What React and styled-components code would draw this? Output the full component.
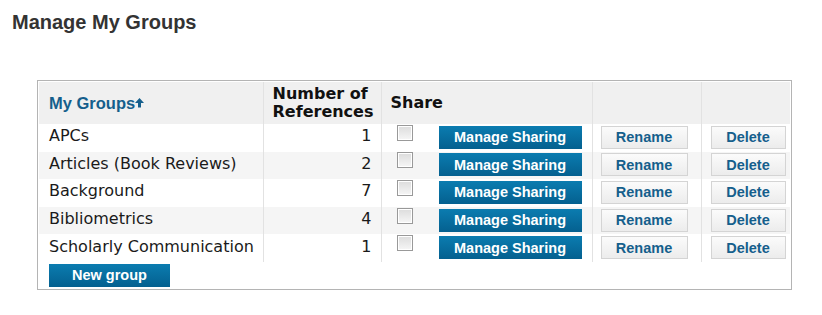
import React from 'react'
import styled, { createGlobalStyle } from 'styled-components'

const GlobalStyle = createGlobalStyle`
  body {
    margin: 0;
    background: #fff;
    font-family: "DejaVu Sans", Verdana, sans-serif;
  }
`

const Page = styled.div`
  padding: 10px 12px;
`

const Title = styled.h1`
  margin: 0;
  font-family: "Liberation Sans", Arial, sans-serif;
  font-size: 20px;
  line-height: 24px;
  font-weight: 700;
  color: #333;
`

const Panel = styled.div`
  margin: 46px 0 0 25px;
  width: 751px;
  border: 1px solid #b4b4b4;
  padding: 1px 1px 2px 1px;
`

const Table = styled.table`
  width: 100%;
  border-collapse: collapse;
  table-layout: fixed;
`

const HeadRow = styled.tr`
  background: #f0f0f0;
  height: 42px;
`

const Th = styled.th`
  text-align: left;
  vertical-align: middle;
  padding: ${(p) => (p.$first ? '0 0 0 10px' : '0 0 0 9px')};
  font-family: "DejaVu Sans", Verdana, sans-serif;
  font-size: 16px;
  line-height: 18px;
  font-weight: 700;
  color: #111;
  border-left: ${(p) => (p.$first ? 'none' : '1px solid #e2e2e2')};
`

const SortLink = styled.a`
  font-family: "Liberation Sans", Arial, sans-serif;
  font-size: 16.5px;
  font-weight: 700;
  color: #155f8c;
  text-decoration: none;
  display: inline-flex;
  align-items: center;
`

const Row = styled.tr`
  height: 27.6px;
  background: ${(p) => (p.$alt ? '#f5f5f5' : '#fff')};
`

const Td = styled.td`
  padding: ${(p) => p.$pad || '0 0 3px 10px'};
  font-size: 16px;
  line-height: 18px;
  color: #1a1a1a;
  text-align: ${(p) => (p.$right ? 'right' : 'left')};
  vertical-align: middle;
  border-left: ${(p) => (p.$first ? 'none' : '1px solid #e2e2e2')};
  white-space: nowrap;
`

const ShareCell = styled.div`
  display: flex;
  align-items: flex-start;
  gap: 26px;
`

const Check = styled.input.attrs({ type: 'checkbox' })`
  appearance: none;
  margin: -1px 0 0 0;
  width: 16px;
  height: 16px;
  border: 1px solid #999;
  background: linear-gradient(#dcdcdc, #f6f6f6);
  box-shadow: inset 0 0 0 1px #fff;
`

const BlueButton = styled.button`
  width: ${(p) => p.$w}px;
  height: 23px;
  padding: 0;
  border: none;
  background: linear-gradient(#0b7cb0, #04608f);
  color: #fff;
  font-family: "Liberation Sans", Arial, sans-serif;
  font-size: 14.5px;
  font-weight: 700;
`

const GreyButton = styled.button`
  width: ${(p) => p.$w}px;
  height: 23px;
  padding: 0;
  border: 1px solid #d4d4d4;
  background: linear-gradient(#fbfbfb, #ececec);
  color: #155f8c;
  font-family: "Liberation Sans", Arial, sans-serif;
  font-size: 14.5px;
  font-weight: 700;
`

const Footer = styled.div`
  padding: 2px 0 0 10px;
`

const UpArrow = () => (
  <svg width="9" height="11" viewBox="0 0 9 11">
    <path d="M4.5 1 L9 6 H6 V10.5 H3 V6 H0 Z" fill="#155f8c" />
  </svg>
)

const groups = [
  { name: 'APCs', count: 1 },
  { name: 'Articles (Book Reviews)', count: 2 },
  { name: 'Background', count: 7 },
  { name: 'Bibliometrics', count: 4 },
  { name: 'Scholarly Communication', count: 1 },
]

export default function App() {
  return (
    <Page>
      <GlobalStyle />
      <Title>Manage My Groups</Title>
      <Panel>
        <Table>
          <colgroup>
            <col style={{ width: 224 }} />
            <col style={{ width: 118 }} />
            <col style={{ width: 211 }} />
            <col style={{ width: 109 }} />
            <col />
          </colgroup>
          <thead>
            <HeadRow>
              <Th $first>
                <SortLink href="#">
                  My Groups
                  <UpArrow />
                </SortLink>
              </Th>
              <Th>
                Number of
                <br />
                References
              </Th>
              <Th>Share</Th>
              <Th />
              <Th />
            </HeadRow>
          </thead>
          <tbody>
            {groups.map((g, i) => (
              <Row key={g.name} $alt={i % 2 === 1}>
                <Td $first>{g.name}</Td>
                <Td $right $pad="0 9px 3px 0">{g.count}</Td>
                <Td $pad="0 0 1px 15px">
                  <ShareCell>
                    <Check />
                    <BlueButton $w={143}>Manage Sharing</BlueButton>
                  </ShareCell>
                </Td>
                <Td $pad="0 0 1px 8px">
                  <GreyButton $w={87}>Rename</GreyButton>
                </Td>
                <Td $pad="0 0 1px 9px">
                  <GreyButton $w={75}>Delete</GreyButton>
                </Td>
              </Row>
            ))}
          </tbody>
        </Table>
        <Footer>
          <BlueButton $w={121}>New group</BlueButton>
        </Footer>
      </Panel>
    </Page>
  )
}
